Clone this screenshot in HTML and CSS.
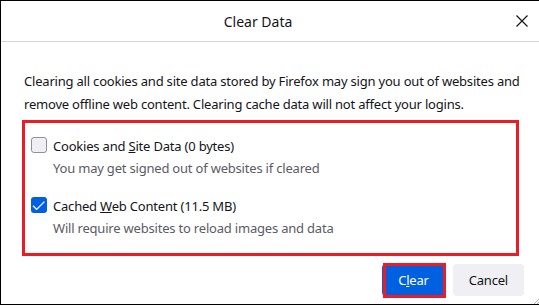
FILE: index.html
```
<!doctype html>
<html>
<head>
<meta charset="utf-8">
<title>Clear Data</title>
<link rel="stylesheet" href="styles.css">
</head>
<body>
<div class="dialog">
  <div class="dialog-header">
    <span class="dialog-title">Clear Data</span>
    <button class="close" type="button">
      <svg width="12" height="12" viewBox="0 0 12 12"><path d="M0.5 0.5 L11.5 11.5 M11.5 0.5 L0.5 11.5" stroke="#15141a" stroke-width="1.2" fill="none"/></svg>
    </button>
  </div>
  <div class="dialog-body">
    <p class="intro">Clearing all cookies and site data stored by Firefox may sign you out of websites and<br>remove offline web content. Clearing cache data will not affect your logins.</p>
    <div class="options">
      <label class="option">
        <span class="box"></span>
        <span class="option-text">
          <span class="option-label">Cookies and <u>S</u>ite Data (0 bytes)</span>
          <span class="option-desc">You may get signed out of websites if cleared</span>
        </span>
      </label>
      <label class="option">
        <span class="box checked">
          <svg width="16" height="16" viewBox="0 0 16 16"><path d="M2 8.8 L5.6 12.4 L13.4 4.6" stroke="#fff" stroke-width="1.3" fill="none"/></svg>
        </span>
        <span class="option-text">
          <span class="option-label">Cached <u>W</u>eb Content (11.5 MB)</span>
          <span class="option-desc">Will require websites to reload images and data</span>
        </span>
      </label>
    </div>
    <div class="actions">
      <button class="btn primary" type="button">C<u>l</u>ear</button>
      <button class="btn" type="button">Cancel</button>
    </div>
  </div>
  <svg class="grip" width="5" height="5" viewBox="0 0 5 5"><path d="M0 5 L5 0 M3 5 L5 3" stroke="#a0a0a0" stroke-width="0.8"/></svg>
</div>
</body>
</html>
```
FILE: styles.css
```
body{
  margin:0;
  background:#fff;
  font-family:"Noto Sans","Liberation Sans",sans-serif;
  font-size:13px;
  letter-spacing:-0.2px;
  color:#15141a;
}
.dialog{
  position:relative;
  box-sizing:border-box;
  height:305px;
  border-top:1px solid #000;
  border-left:1px solid #000;
  border-bottom:1px solid #000;
}
.dialog-header{
  box-sizing:border-box;
  height:41px;
  display:flex;
  align-items:center;
  padding:0 5px;
  border-bottom:1px solid #d7d7db;
}
.dialog-title{
  flex:1;
  text-align:center;
  font-size:14px;
  letter-spacing:0;
}
.close{
  width:24px;
  height:24px;
  padding:0;
  border:0;
  background:none;
  display:flex;
  align-items:center;
  justify-content:center;
}
.dialog-body{
  padding:28px 15px 0 23px;
}
.intro{
  margin:0;
  line-height:23px;
  white-space:nowrap;
}
.options{
  box-sizing:border-box;
  width:497px;
  margin:4px 0 0 -2px;
  padding:12px 6px 14px;
  border:3px solid #ed1c24;
  display:flex;
  flex-direction:column;
  gap:16px;
}
.option{
  display:flex;
  align-items:flex-start;
  gap:6px;
  line-height:22px;
}
.box{
  box-sizing:border-box;
  width:16px;
  height:16px;
  margin-top:2px;
  border:1px solid #8f8f9d;
  border-radius:3px;
  background:#f0f0f4;
}
.box.checked{
  border:0;
  background:#0061e0;
}
.box svg{
  display:block;
}
.option-text{
  display:flex;
  flex-direction:column;
}
.option-desc{
  color:#5b5b66;
}
.actions{
  margin-top:8px;
  display:flex;
  justify-content:flex-end;
  gap:8px;
}
.btn{
  height:32px;
  padding:0 16px;
  border:0;
  border-radius:4px;
  background:#f0f0f4;
  color:#15141a;
  font:inherit;
  letter-spacing:inherit;
}
.btn.primary{
  position:relative;
  background:#0061e0;
  color:#fff;
}
.btn.primary::after{
  content:"";
  position:absolute;
  top:-1px;
  left:1px;
  right:-1px;
  bottom:-2px;
  border:3px solid #ed1c24;
}
.grip{
  position:absolute;
  right:0;
  bottom:0;
}
```
